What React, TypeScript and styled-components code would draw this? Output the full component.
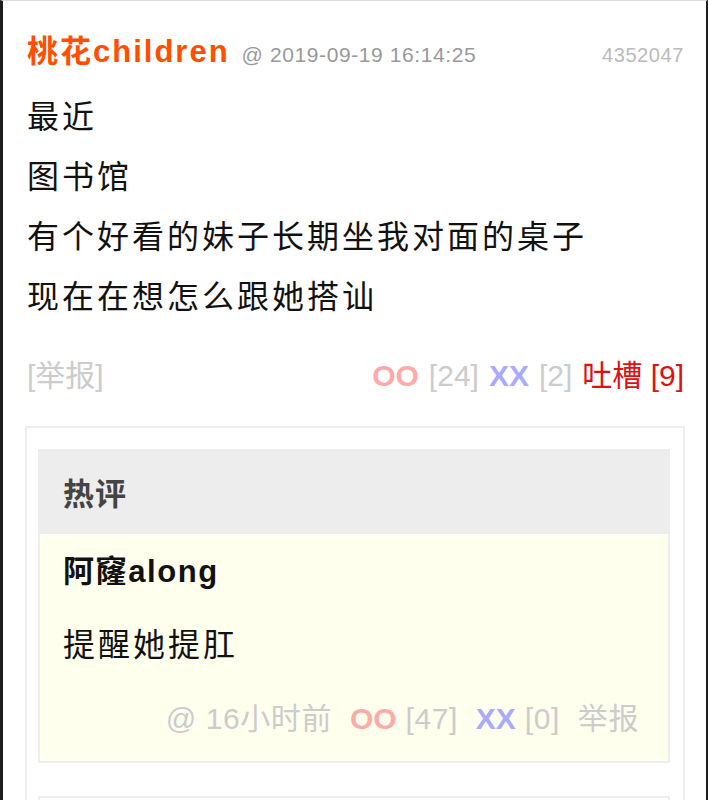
import React from "react";
import styled, { createGlobalStyle } from "styled-components";

const Global = createGlobalStyle`
  html, body { margin: 0; padding: 0; background: #ffffff; overflow: hidden; }
  body { font-family: "Liberation Sans", "Noto Sans CJK SC", sans-serif; }
  * { box-sizing: border-box; }
`;

const Page = styled.div`
  width: 708px;
  height: 800px;
  overflow: hidden;
  background: #fff;
  border-left: 3px solid #1e1e1e;
  border-right: 2px solid #1e1e1e;
  border-top: 1px solid #dcdcdc;
  padding: 0 21px 0 22px;
`;

const Post = styled.div`
  padding: 0 1px 0 2px;
`;

const Header = styled.div`
  display: flex;
  align-items: baseline;
  padding-top: 25px;
  height: 86px;
`;

const Author = styled.span`
  font-size: 31px;
  font-weight: bold;
  color: #ff4e00;
  letter-spacing: 2px;
`;

const Date = styled.span`
  font-size: 21px;
  color: #999;
  margin-left: 12px;
  letter-spacing: 0.6px;
`;

const PostId = styled.span`
  margin-left: auto;
  font-size: 20px;
  color: #bbb;
  letter-spacing: 0.6px;
`;

const Body = styled.div`
  font-size: 32px;
  line-height: 60px;
  color: #111;
  letter-spacing: 3px;
`;

const Actions = styled.div`
  display: flex;
  justify-content: space-between;
  align-items: baseline;
  margin-top: 29px;
  font-size: 30px;
  line-height: 40px;
  color: #ccc;
`;

const Votes = styled.div`
  display: flex;
  align-items: baseline;
  gap: 10px;
`;

const Mark = styled.span<{ $c: string }>`
  font-weight: bold;
  color: ${(p) => p.$c};
  letter-spacing: 0;
`;

const Count = styled.span<{ $c?: string }>`
  color: ${(p) => p.$c || "#ccc"};
`;

const HotBox = styled.div`
  margin-top: 30px;
  border: 2px solid #eee;
  padding: 21px 13px 0 11px;
  height: 500px;
`;

const HotTitle = styled.div`
  height: 85px;
  background: #ededed;
  display: flex;
  align-items: center;
  padding-left: 25px;
  font-size: 31px;
  font-weight: bold;
  color: #444;
  letter-spacing: 1px;
`;

const Comment = styled.div`
  background: #ffffee;
  border: 2px solid #eee;
  border-top: none;
  padding: 18px 25px 0 23px;
  height: 229px;
`;

const CommentAuthor = styled.div`
  font-size: 31px;
  font-weight: bold;
  color: #111;
  line-height: 40px;
  letter-spacing: 1.6px;
`;

const CommentText = styled.div`
  font-size: 32px;
  color: #111;
  line-height: 40px;
  margin-top: 33px;
  letter-spacing: 3px;
`;

const CommentFoot = styled.div`
  display: flex;
  justify-content: flex-end;
  align-items: baseline;
  margin-top: 36px;
  padding-right: 4px;
  font-size: 30px;
  line-height: 36px;
  color: #ccc;
  white-space: pre;
  letter-spacing: 0.6px;
`;

const NextBox = styled.div`
  margin-top: 33px;
  border-top: 2px solid #eee;
  border-left: 2px solid #eee;
  border-right: 2px solid #eee;
  height: 100px;
`;

export default function App() {
  return (
    <>
      <Global />
      <Page>
        <Post>
          <Header>
            <Author>桃花children</Author>
            <Date>@ 2019-09-19 16:14:25</Date>
            <PostId>4352047</PostId>
          </Header>
          <Body>
            <div>最近</div>
            <div>图书馆</div>
            <div>有个好看的妹子长期坐我对面的桌子</div>
            <div>现在在想怎么跟她搭讪</div>
          </Body>
          <Actions>
            <span>[举报]</span>
            <Votes>
              <Mark $c="#ffaaaa">OO</Mark>
              <Count>[24]</Count>
              <Mark $c="#aaaaff">XX</Mark>
              <Count>[2]</Count>
              <Count $c="#e01010">吐槽 [9]</Count>
            </Votes>
          </Actions>
        </Post>
        <HotBox>
          <HotTitle>热评</HotTitle>
          <Comment>
            <CommentAuthor>阿窿along</CommentAuthor>
            <CommentText>提醒她提肛</CommentText>
            <CommentFoot>
              <span>{"@ 16小时前  "}</span>
              <Mark $c="#ffaaaa">OO</Mark>
              <Count>{" [47]  "}</Count>
              <Mark $c="#aaaaff">XX</Mark>
              <Count>{" [0]  举报"}</Count>
            </CommentFoot>
          </Comment>
          <NextBox />
        </HotBox>
      </Page>
    </>
  );
}
